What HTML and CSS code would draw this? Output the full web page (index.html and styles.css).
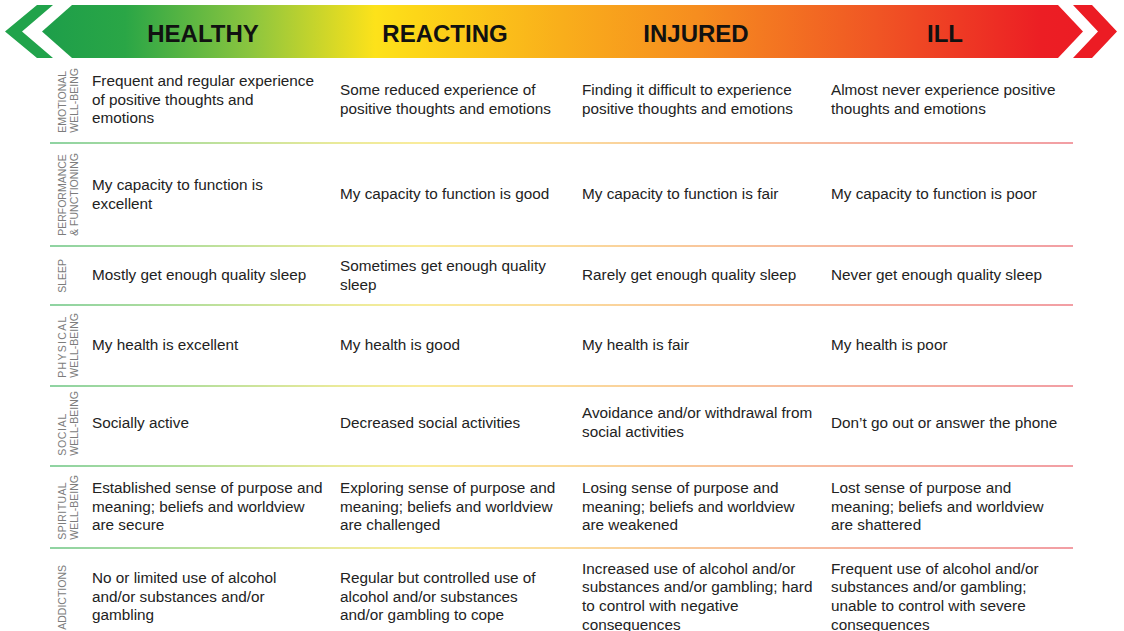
FILE: index.html
```html
<!DOCTYPE html>
<html lang="en">
<head>
<meta charset="utf-8">
<title>Mental Health Continuum</title>
<link rel="stylesheet" href="styles.css">
</head>
<body>
<header class="scale">
  <svg class="scale-art" viewBox="0 0 1124 64" width="1124" height="64" aria-hidden="true">
    <defs>
      <linearGradient id="band" gradientUnits="userSpaceOnUse" x1="42" y1="0" x2="1083" y2="0">
        <stop offset="0" stop-color="#1d9e4a"/>
        <stop offset="0.08" stop-color="#2aa646"/>
        <stop offset="0.2" stop-color="#8bc53f"/>
        <stop offset="0.32" stop-color="#fde21a"/>
        <stop offset="0.36" stop-color="#fdd618"/>
        <stop offset="0.5" stop-color="#f9ae1b"/>
        <stop offset="0.63" stop-color="#f68d1f"/>
        <stop offset="0.8" stop-color="#f05624"/>
        <stop offset="0.96" stop-color="#ec1e24"/>
        <stop offset="1" stop-color="#ec1c24"/>
      </linearGradient>
    </defs>
    <polygon points="37,5 53,5 22,31.5 53,58 37,58 5,31.5" fill="#21a34b"/>
    <polygon points="72,5 1058,5 1083,31.5 1058,58 72,58 42,31.5" fill="url(#band)"/>
    <polygon points="1073,5 1092,5 1117,31.5 1092,58 1073,58 1098,31.5" fill="#ec1c24"/>
  </svg>
  <div class="scale-labels">
    <h2>HEALTHY</h2>
    <h2>REACTING</h2>
    <h2>INJURED</h2>
    <h2>ILL</h2>
  </div>
</header>

<main class="chart">
  <div class="row r1">
    <div class="label">EMOTIONAL<br>WELL-BEING</div>
    <div class="cell">Frequent and regular experience<br>of positive thoughts and<br>emotions</div>
    <div class="cell">Some reduced experience of<br>positive thoughts and emotions</div>
    <div class="cell">Finding it difficult to experience<br>positive thoughts and emotions</div>
    <div class="cell">Almost never experience positive<br>thoughts and emotions</div>
  </div>
  <div class="row r2">
    <div class="label">PERFORMANCE<br>&amp; FUNCTIONING</div>
    <div class="cell">My capacity to function is<br>excellent</div>
    <div class="cell">My capacity to function is good</div>
    <div class="cell">My capacity to function is fair</div>
    <div class="cell">My capacity to function is poor</div>
  </div>
  <div class="row r3">
    <div class="label">SLEEP</div>
    <div class="cell">Mostly get enough quality sleep</div>
    <div class="cell">Sometimes get enough quality<br>sleep</div>
    <div class="cell">Rarely get enough quality sleep</div>
    <div class="cell">Never get enough quality sleep</div>
  </div>
  <div class="row r4">
    <div class="label"><span class="wide">PHYSICAL</span><br>WELL-BEING</div>
    <div class="cell">My health is excellent</div>
    <div class="cell">My health is good</div>
    <div class="cell">My health is fair</div>
    <div class="cell">My health is poor</div>
  </div>
  <div class="row r5">
    <div class="label"><span class="mid">SOCIAL</span><br>WELL-BEING</div>
    <div class="cell">Socially active</div>
    <div class="cell">Decreased social activities</div>
    <div class="cell">Avoidance and/or withdrawal from<br>social activities</div>
    <div class="cell">Don’t go out or answer the phone</div>
  </div>
  <div class="row r6">
    <div class="label"><span class="slight">SPIRITUAL</span><br>WELL-BEING</div>
    <div class="cell">Established sense of purpose and<br>meaning; beliefs and worldview<br>are secure</div>
    <div class="cell">Exploring sense of purpose and<br>meaning; beliefs and worldview<br>are challenged</div>
    <div class="cell">Losing sense of purpose and<br>meaning; beliefs and worldview<br>are weakened</div>
    <div class="cell">Lost sense of purpose and<br>meaning; beliefs and worldview<br>are shattered</div>
  </div>
  <div class="row r7">
    <div class="label">ADDICTIONS</div>
    <div class="cell">No or limited use of alcohol<br>and/or substances and/or<br>gambling</div>
    <div class="cell">Regular but controlled use of<br>alcohol and/or substances<br>and/or gambling to cope</div>
    <div class="cell">Increased use of alcohol and/or<br>substances and/or gambling; hard<br>to control with negative<br>consequences</div>
    <div class="cell">Frequent use of alcohol and/or<br>substances and/or gambling;<br>unable to control with severe<br>consequences</div>
  </div>
</main>
</body>
</html>
```

FILE: styles.css
```css
* {
  box-sizing: border-box;
}

html,
body {
  margin: 0;
  padding: 0;
  background: #ffffff;
  overflow: hidden;
}

body {
  font-family: "Liberation Sans", Arial, sans-serif;
  color: #222222;
}

/* ---------- header scale ---------- */
.scale {
  position: relative;
  height: 58px;
}

.scale-art {
  position: absolute;
  left: 0;
  top: 0;
  display: block;
}

.scale-labels {
  position: relative;
  display: grid;
  grid-template-columns: 242px 242px 260px 238px;
  padding: 22px 0 0 82px;
}

.scale-labels h2 {
  margin: 0;
  font-size: 24px;
  line-height: 24px;
  font-weight: 700;
  text-align: center;
  color: #111111;
}

/* ---------- chart rows ---------- */
.chart {
  display: block;
  margin-left: 50px;
  width: 1023px;
}

.row {
  display: grid;
  grid-template-columns: 42px 248px 242px 249px 242px;
  align-items: center;
  border-bottom: 2px solid transparent;
  border-image: linear-gradient(90deg,
      #8ed3a2 0%,
      #b6df9c 14%,
      #e9ea9a 28%,
      #f9ec9c 36%,
      #fbdc9c 50%,
      #f9c99b 62%,
      #f6b4a0 80%,
      #f29ea4 100%) 1;
}

.r1 { height: 86px; }
.r2 { height: 103px; }
.r3 { height: 59px; }
.r4 { height: 81px; }
.r5 { height: 80px; padding-bottom: 6px; }
.r6 { height: 82px; }
.r7 { height: 96px; border-bottom: 0; }

.label {
  justify-self: start;
  margin-left: 6px;
  writing-mode: vertical-rl;
  transform: rotate(180deg);
  font-size: 10.5px;
  line-height: 12px;
  color: #7c7c7c;
  white-space: nowrap;
}

.label .wide {
  letter-spacing: 1.3px;
}

.label .mid {
  letter-spacing: 0.7px;
}

.label .slight {
  letter-spacing: 0.4px;
}

.cell {
  font-size: 15.3px;
  line-height: 18.6px;
  white-space: nowrap;
}
```
